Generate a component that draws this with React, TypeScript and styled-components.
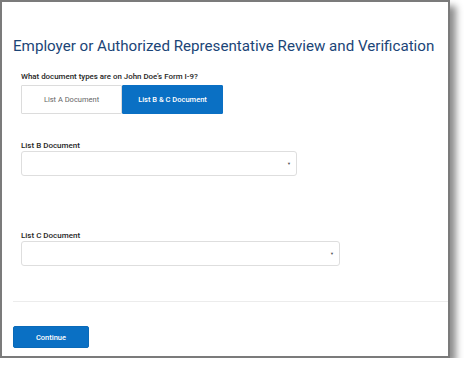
import React, { useState } from 'react';
import styled, { createGlobalStyle } from 'styled-components';

const GlobalStyle = createGlobalStyle`
  html, body {
    margin: 0;
    padding: 0;
    background: #ffffff;
  }
  body {
    font-family: Roboto, "Liberation Sans", Arial, sans-serif;
  }
  * {
    box-sizing: border-box;
  }
`;

const Frame = styled.div`
  width: 450px;
  height: 358px;
  border: 2px solid #7b7b7b;
  background: #fff;
  box-shadow: 6px 6px 7px rgba(0, 0, 0, 0.45);
  display: flex;
  flex-direction: column;
`;

const Body = styled.div`
  padding: 35px 0 0 11px;
  flex: 1;
`;

const Title = styled.h1`
  margin: 0;
  font-size: 15.15px;
  line-height: 18px;
  font-weight: 400;
  color: #1b4577;
  white-space: nowrap;
`;

const Section = styled.div`
  padding-left: 8px;
`;

const Question = styled.div`
  margin-top: 17px;
  font-size: 7.9px;
  line-height: 10px;
  font-weight: 500;
  color: #262626;
`;

const Toggle = styled.div`
  display: flex;
  margin-top: 3px;
`;

const ToggleButton = styled.button<{ active?: boolean }>`
  width: 101px;
  height: 29px;
  padding: 0;
  font-family: inherit;
  font-size: 7.5px;
  font-weight: ${({ active }) => (active ? 500 : 400)};
  color: ${({ active }) => (active ? '#fff' : '#666')};
  background: ${({ active }) => (active ? '#0a70c4' : '#fff')};
  border: 1px solid ${({ active }) => (active ? '#0a70c4' : '#dcdcdc')};
  border-radius: 1px;
  cursor: pointer;
`;

const Field = styled.div<{ gap: number }>`
  margin-top: ${({ gap }) => gap}px;
  display: flex;
  flex-direction: column;
`;

const Label = styled.label`
  font-size: 8px;
  line-height: 10px;
  font-weight: 500;
  color: #262626;
`;

const Select = styled.div<{ w: number }>`
  width: ${({ w }) => w}px;
  height: 25px;
  border: 1px solid #dedede;
  border-radius: 3px;
  display: flex;
  align-items: center;
  justify-content: flex-end;
  padding-right: 5px;
  font-size: 4px;
  color: #555;
`;

const Divider = styled.hr`
  margin: 0 0 0 11px;
  border: none;
  border-top: 1px solid #ececec;
`;

const Footer = styled.div`
  display: flex;
  padding: 24px 0 8px 11px;
`;

const PrimaryButton = styled.button`
  width: 76px;
  height: 22px;
  background: #0a70c4;
  border: 1px solid #0a6ab8;
  border-radius: 2px;
  color: #fff;
  font-family: inherit;
  font-size: 7.5px;
  font-weight: 500;
  cursor: pointer;
`;

export default function App() {
  const [list, setList] = useState<'A' | 'BC'>('BC');

  return (
    <>
      <GlobalStyle />
      <Frame>
        <Body>
          <Title>Employer or Authorized Representative Review and Verification</Title>
          <Section>
            <Question>What document types are on John Doe’s Form I-9?</Question>
            <Toggle>
              <ToggleButton active={list === 'A'} onClick={() => setList('A')}>
                List A Document
              </ToggleButton>
              <ToggleButton active={list === 'BC'} onClick={() => setList('BC')}>
                List B &amp; C Document
              </ToggleButton>
            </Toggle>
            <Field gap={27}>
              <Label>List B Document</Label>
              <Select w={276}>▼</Select>
            </Field>
            <Field gap={55}>
              <Label>List C Document</Label>
              <Select w={319}>▼</Select>
            </Field>
          </Section>
        </Body>
        <Divider />
        <Footer>
          <PrimaryButton>Continue</PrimaryButton>
        </Footer>
      </Frame>
    </>
  );
}
